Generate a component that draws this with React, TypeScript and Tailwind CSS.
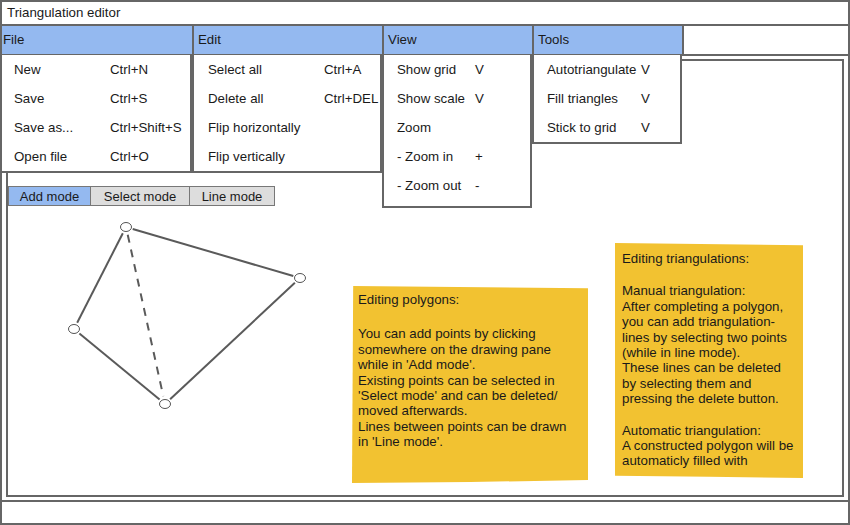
import React from "react";

type Item = { label: string; key?: string };

type Menu = {
    title: string;
    width: string;
    titlePad: string;
    itemPad: string;
    labelWidth: string;
    extra?: string;
    items: Item[];
};

const menus: Menu[] = [
    {
        title: "File",
        width: "w-[192px]",
        titlePad: "pl-[1px]",
        itemPad: "pl-[12px]",
        labelWidth: "w-[96px]",
        items: [
            { label: "New", key: "Ctrl+N" },
            { label: "Save", key: "Ctrl+S" },
            { label: "Save as...", key: "Ctrl+Shift+S" },
            { label: "Open file", key: "Ctrl+O" },
        ],
    },
    {
        title: "Edit",
        width: "w-[190px]",
        titlePad: "pl-[4px]",
        itemPad: "pl-[14px]",
        labelWidth: "w-[116px]",
        items: [
            { label: "Select all", key: "Ctrl+A" },
            { label: "Delete all", key: "Ctrl+DEL" },
            { label: "Flip horizontally" },
            { label: "Flip vertically" },
        ],
    },
    {
        title: "View",
        width: "w-[150px]",
        titlePad: "pl-[4px]",
        itemPad: "pl-[13px]",
        labelWidth: "w-[78px]",
        extra: "pb-[6px]",
        items: [
            { label: "Show grid", key: "V" },
            { label: "Show scale", key: "V" },
            { label: "Zoom" },
            { label: "- Zoom in", key: "+" },
            { label: "- Zoom out", key: "-" },
        ],
    },
    {
        title: "Tools",
        width: "w-[150px]",
        titlePad: "pl-[4px]",
        itemPad: "pl-[13px]",
        labelWidth: "w-[94px]",
        items: [
            { label: "Autotriangulate", key: "V" },
            { label: "Fill triangles", key: "V" },
            { label: "Stick to grid", key: "V" },
        ],
    },
];

// polygon points, relative to the drawing pane
const pts = [
    { x: 118, y: 166 },
    { x: 292, y: 217 },
    { x: 157, y: 343 },
    { x: 66, y: 268 },
];

// shorten a segment so it stops at the ellipse edges
function seg(a: { x: number; y: number }, b: { x: number; y: number }, pad = 7) {
    const dx = b.x - a.x;
    const dy = b.y - a.y;
    const len = Math.hypot(dx, dy);
    const ux = dx / len;
    const uy = dy / len;
    return { x1: a.x + ux * pad, y1: a.y + uy * pad, x2: b.x - ux * pad, y2: b.y - uy * pad };
}

function MenuBox({ menu }: { menu: Menu }) {
    return (
        <div className={`relative ${menu.width} h-full shrink-0 border-r-2 border-[#666] bg-[#94b9f0] flex items-center ${menu.titlePad}`}>
            <span>{menu.title}</span>
            <div className={`absolute left-[-2px] top-[29px] w-[calc(100%+2px)] z-10 bg-white border-2 border-t-0 border-[#666] ${menu.extra ?? ""}`}>
                {menu.items.map((it) => (
                    <div key={it.label} className={`flex items-center h-[29px] ${menu.itemPad}`}>
                        <span className={`${menu.labelWidth} shrink-0 whitespace-nowrap`}>{it.label}</span>
                        {it.key && <span className="whitespace-nowrap">{it.key}</span>}
                    </div>
                ))}
            </div>
        </div>
    );
}

export default function App() {
    return (
        <div
            className="w-[850px] h-[525px] bg-white border-2 border-[#666] flex flex-col text-[13.3px] text-[#1a1a1a] overflow-hidden"
            style={{ fontFamily: '"Liberation Sans", Arial, sans-serif' }}
        >
            {/* Title */}
            <div className="h-[24px] shrink-0 border-b-2 border-[#666] flex items-center pl-[5px]">
                Triangulation editor
            </div>

            {/* Menu bar */}
            <div className="relative z-10 h-[30px] shrink-0 border-b-2 border-[#666] flex">
                {menus.map((m) => (
                    <MenuBox key={m.title} menu={m} />
                ))}
            </div>

            {/* Drawing area */}
            <div className="flex-1 px-[4px] pt-[3px] pb-[3px] flex">
                <div className="relative flex-1 border-2 border-[#666]">
                    <div className="pt-[125px] flex">
                        <div className="flex h-[20px] border border-[#777] text-[13px]">
                            <button className="w-[82px] bg-[#94b9f0] border-r border-[#777]">Add mode</button>
                            <button className="w-[99px] bg-[#ddd] border-r border-[#777]">Select mode</button>
                            <button className="w-[84px] bg-[#ddd]">Line mode</button>
                        </div>
                    </div>

                    <svg className="absolute inset-0" width="100%" height="100%">
                        {[[0, 1], [1, 2], [2, 3], [3, 0]].map(([a, b]) => {
                            const s = seg(pts[a], pts[b]);
                            return <line key={`${a}${b}`} {...s} stroke="#5a5a5a" strokeWidth={2} />;
                        })}
                        <line {...seg(pts[0], pts[2], 8)} stroke="#5a5a5a" strokeWidth={2} strokeDasharray="8 7" />
                        {pts.map((p, i) => (
                            <ellipse key={i} cx={p.x} cy={p.y} rx={5.5} ry={4.5} fill="white" stroke="#555" strokeWidth={1} />
                        ))}
                    </svg>

                    {/* Sticky notes */}
                    <div className="absolute left-[344px] top-[225px] w-[236px] h-[197px] bg-[#f2c231] pl-[6px] pt-[6px] text-[13.3px] leading-[15.4px] [clip-path:polygon(0.5%_0,100%_1.2%,100%_98.5%,50%_99.5%,0_100%)]">
                        <p>Editing polygons:</p>
                        <p className="mt-[19px] whitespace-pre-line">
                            {"You can add points by clicking\nsomewhere on the drawing pane\nwhile in 'Add mode'.\nExisting points can be selected in\n'Select mode' and can be deleted/\nmoved afterwards.\nLines between points can be drawn\nin 'Line mode'."}
                        </p>
                    </div>

                    <div className="absolute left-[607px] top-[182px] w-[188px] h-[235px] bg-[#f2c231] pl-[7px] pt-[8px] text-[13.3px] leading-[15.4px] [clip-path:polygon(0_0,100%_1%,100%_100%,50%_99.5%,0_99%)]">
                        <p>Editing triangulations:</p>
                        <p className="mt-[17px] whitespace-pre-line">
                            {"Manual triangulation:\nAfter completing a polygon,\nyou can add triangulation-\nlines by selecting two points\n(while in line mode).\nThese lines can be deleted\nby selecting them and\npressing the delete button."}
                        </p>
                        <p className="mt-[16px] whitespace-pre-line">
                            {"Automatic triangulation:\nA constructed polygon will be\nautomaticly filled with"}
                        </p>
                    </div>
                </div>
            </div>

            {/* Status bar */}
            <div className="h-[23px] shrink-0 border-t-2 border-[#666]" />
        </div>
    );
}
